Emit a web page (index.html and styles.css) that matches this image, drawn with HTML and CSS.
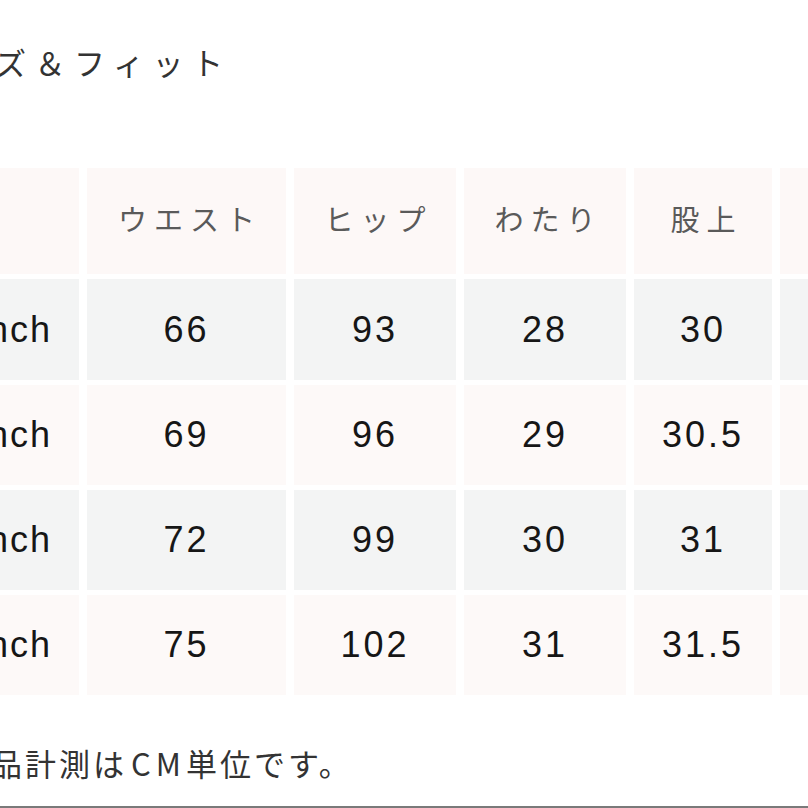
FILE: index.html
```html
<!DOCTYPE html>
<html lang="ja">
<head>
<meta charset="utf-8">
<title>サイズ＆フィット</title>
<link rel="stylesheet" href="styles.css">
</head>
<body>
<div class="page">
  <h2 class="title">サイズ＆フィット</h2>
  <div class="table">
    <div class="cell head"></div>
    <div class="cell head">ウエスト</div>
    <div class="cell head">ヒップ</div>
    <div class="cell head">わたり</div>
    <div class="cell head">股上</div>
    <div class="cell head">股下</div>

    <div class="cell odd size">25 inch</div>
    <div class="cell odd">66</div>
    <div class="cell odd">93</div>
    <div class="cell odd">28</div>
    <div class="cell odd">30</div>
    <div class="cell odd">78</div>

    <div class="cell even size">26 inch</div>
    <div class="cell even">69</div>
    <div class="cell even">96</div>
    <div class="cell even">29</div>
    <div class="cell even">30.5</div>
    <div class="cell even">78</div>

    <div class="cell odd size">27 inch</div>
    <div class="cell odd">72</div>
    <div class="cell odd">99</div>
    <div class="cell odd">30</div>
    <div class="cell odd">31</div>
    <div class="cell odd">79</div>

    <div class="cell even size">28 inch</div>
    <div class="cell even">75</div>
    <div class="cell even">102</div>
    <div class="cell even">31</div>
    <div class="cell even">31.5</div>
    <div class="cell even">79</div>
  </div>
  <p class="note">※商品計測は<span class="latin">CM</span>単位です。</p>
</div>
<div class="rule"></div>
</body>
</html>
```

FILE: styles.css
```css
html, body {
  margin: 0;
  padding: 0;
  background: #ffffff;
}
body {
  width: 808px;
  height: 808px;
  overflow: hidden;
  position: relative;
  font-family: "Liberation Sans", "Noto Sans CJK JP", sans-serif;
}
.page {
  margin-left: -145px;
  width: 1100px;
  padding-top: 42px;
}
.title {
  margin: 0 0 86px 62px;
  font-family: "Noto Sans CJK JP", sans-serif;
  font-weight: 400;
  font-size: 31px;
  line-height: 40px;
  letter-spacing: 8.5px;
  color: #333333;
}
.table {
  display: grid;
  grid-template-columns: 224px 199px 162px 162px 138px 140px;
  grid-template-rows: 106px 101px 100px 100px 100px;
  column-gap: 8px;
  row-gap: 5px;
}
.cell {
  display: flex;
  align-items: center;
  justify-content: center;
  font-size: 36px;
  letter-spacing: 3px;
  color: #161616;
}
.head {
  background: #fdf8f7;
  font-family: "Noto Sans CJK JP", sans-serif;
  font-size: 29px;
  letter-spacing: 7px;
  color: #5a5a5a;
  padding-left: 7px;
  padding-bottom: 7px;
}
.odd {
  background: #f3f4f4;
}
.even {
  background: #fdf9f8;
}
.size {
  justify-content: flex-end;
  padding-right: 27px;
  letter-spacing: 2px;
}
.note {
  margin: 48px 0 0 68px;
  font-family: "Noto Sans CJK JP", sans-serif;
  font-size: 31px;
  line-height: 40px;
  letter-spacing: 3px;
  color: #333333;
}
.latin {
  letter-spacing: 5px;
  margin-left: 4px;
}
.rule {
  position: absolute;
  left: 0;
  right: 0;
  bottom: 0;
  height: 2px;
  background: #7a7a7a;
}
```
